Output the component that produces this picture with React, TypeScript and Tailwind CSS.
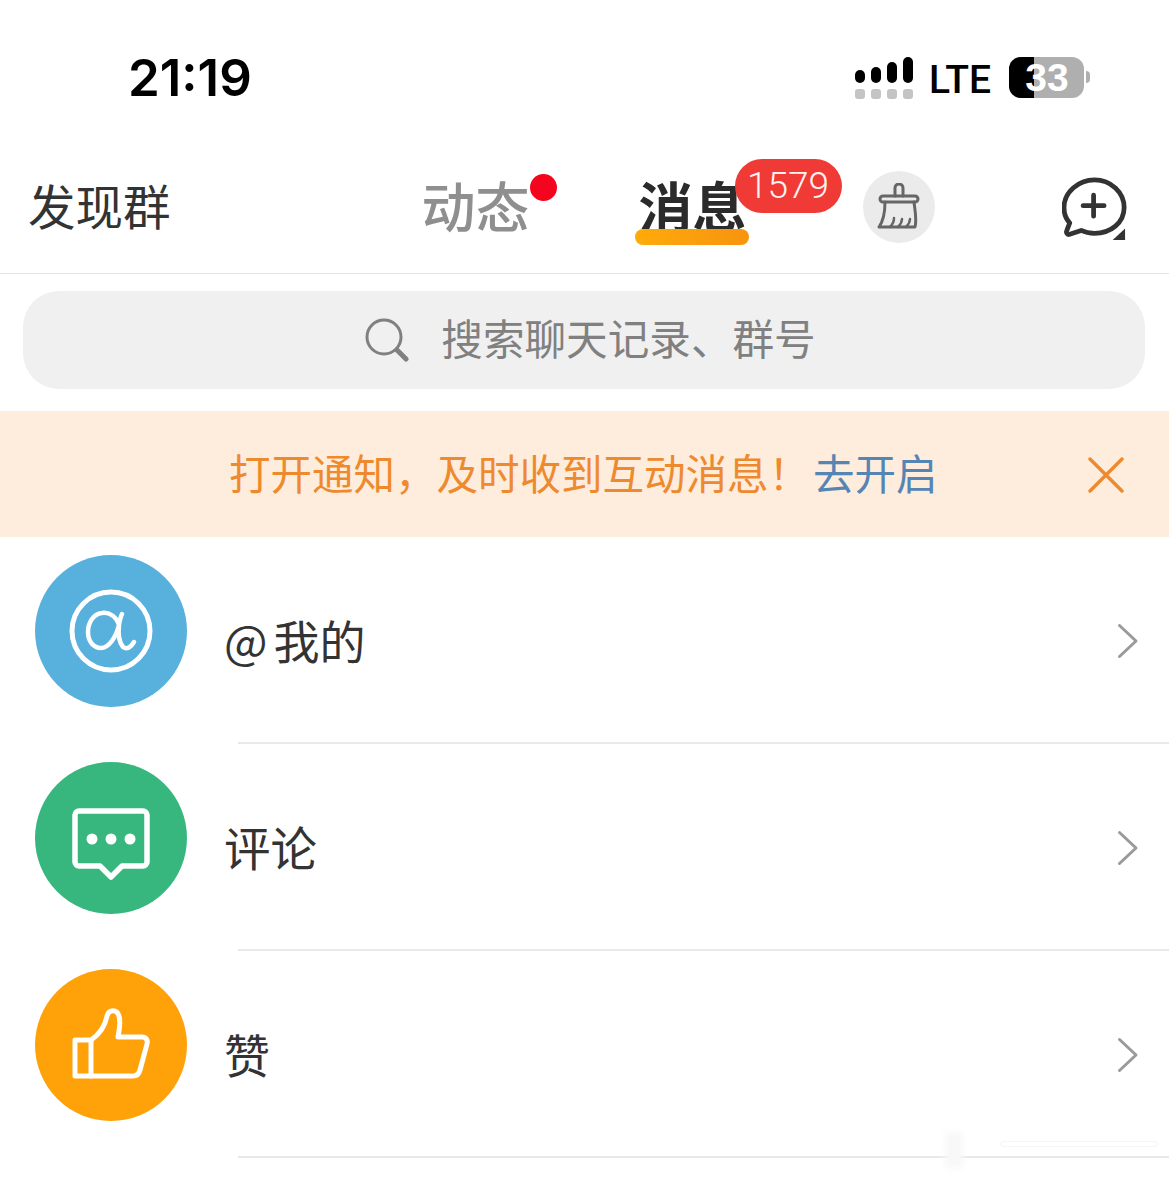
import React from "react";

const cjk = "font-['Noto_Sans_CJK_SC','Noto_Sans',sans-serif]";

function Chevron() {
  return (
    <svg width="24" height="36" viewBox="0 0 24 36" fill="none" className="mr-[29px] mt-[4px] shrink-0">
      <path d="M3.5 2.5 L20 18 L3.5 33.5" stroke="#9a9a9a" strokeWidth="3" strokeLinecap="round" strokeLinejoin="round" />
    </svg>
  );
}

function Row({ color, label, icon, offset }: { color: string; label: React.ReactNode; icon: React.ReactNode; offset: string }) {
  return (
    <div className="h-[207px] relative flex">
      <div className={`w-[152px] h-[152px] rounded-full ml-[35px] mt-[18px] flex items-center justify-center shrink-0 ${color}`}>
        {icon}
      </div>
      <div className="flex-1 flex items-center justify-between ml-[37px] pb-[3px]">
        <div className={`text-[#333] ${offset}`}>{label}</div>
        <Chevron />
      </div>
      <div className="absolute left-[238px] right-0 bottom-0 h-[2px] bg-[#e9e9e9]" />
    </div>
  );
}

export default function App() {
  return (
    <main className={`relative w-[1169px] h-[1181px] bg-white overflow-hidden ${cjk}`}>
      {/* Status bar */}
      <div className="h-[140px] flex items-start justify-between">
        <div className="ml-[128px] mt-[47px] text-[51px] leading-[62px] font-semibold text-black font-['Inter',sans-serif]">
          21:19
        </div>
        <div className="flex items-start mr-[79px] mt-[57px]">
          <div className="w-[58px] mr-[16px]">
            <div className="flex items-end justify-between h-[26px]">
              <div className="w-[10px] h-[13px] bg-black rounded-[5px]" />
              <div className="w-[10px] h-[16px] bg-black rounded-[5px]" />
              <div className="w-[10px] h-[21px] bg-black rounded-[5px]" />
              <div className="w-[10px] h-[26px] bg-black rounded-[5px]" />
            </div>
            <div className="flex justify-between mt-[6px]">
              <div className="w-[10px] h-[10px] bg-[#c4c4c4] rounded-[3px]" />
              <div className="w-[10px] h-[10px] bg-[#c4c4c4] rounded-[3px]" />
              <div className="w-[10px] h-[10px] bg-[#c4c4c4] rounded-[3px]" />
              <div className="w-[10px] h-[10px] bg-[#c4c4c4] rounded-[3px]" />
            </div>
          </div>
          <div className="text-[39px] leading-[44px] font-medium text-black mt-[1px] mr-[18px] font-['Roboto',sans-serif]">LTE</div>
          <div className="relative w-[75px] h-[41px] rounded-[12px] bg-[#afafaf] overflow-hidden">
            <div className="absolute left-0 top-0 bottom-0 w-[25px] bg-black" />
            <div className="absolute inset-0 flex items-center justify-center text-white text-[39px] leading-[38px] font-bold font-['Liberation_Sans',sans-serif] pl-[1px]">33</div>
          </div>
          <div className="w-[4px] h-[12px] mt-[14px] ml-[2px] bg-[#afafaf] rounded-r-[4px]" />
        </div>
      </div>

      {/* Tabs header */}
      <div className="h-[134px] border-b border-[#e4e4e4] flex items-start relative">
        <div className="ml-[28px] mt-[35px] text-[47.5px] leading-[60px] text-[#333]">发现群</div>
        <div className="ml-[251px] mt-[33px] relative">
          <div className="text-[54px] leading-[64px] font-medium text-[#8f8f8f]">动态</div>
          <div className="absolute left-[108px] top-[1px] w-[27px] h-[27px] rounded-full bg-[#f5051d]" />
        </div>
        <div className="ml-[109px] mt-[33px] relative">
          <div className="text-[54px] leading-[64px] font-bold text-[#2b2b2b]">消息</div>
          <div className="absolute left-[-4px] top-[56px] w-[114px] h-[16px] rounded-full bg-gradient-to-r from-[#ffaa0a] to-[#f7940f]" />
          <div className="absolute left-[96px] top-[-14px] w-[107px] h-[54px] rounded-full bg-[#f03a35] flex items-center justify-center text-[#fff2f0] text-[37px] font-light font-['Roboto',sans-serif]">
            1579
          </div>
        </div>
        <div className="ml-[116px] mt-[31px] w-[72px] h-[72px] rounded-full bg-[#ebebeb] flex items-center justify-center">
          <svg width="44" height="48" viewBox="0 0 44 48" fill="none" stroke="#666" strokeWidth="3" strokeLinecap="round" strokeLinejoin="round">
            <path d="M18 13 V5 a4 4 0 0 1 8 0 V13" />
            <rect x="3" y="13" width="38" height="6" rx="3" />
            <path d="M8 19 C8 28 7 37 2 44 H38 C40 36 38 28 37 19" strokeWidth="3" />
            <path d="M13 44 C16 41 17 38 17 35 M21 44 C24 41 25 38 25 36 M29 44 C32 41 33 38 33 36" strokeWidth="2.5" />
          </svg>
        </div>
        <div className="ml-[127px] mt-[37px] relative w-[67px] h-[63px]">
          <svg width="67" height="63" viewBox="0 0 70 66" fill="none">
            <path d="M34 3 C51 3 65 16 65 32 C65 48 51 59 34 59 C29 59 24 58 20 56 L8 60 C5 61 4 58 5 56 L8 48 C4 44 2 38 2 32 C2 16 17 3 34 3 Z" stroke="#333" strokeWidth="5" strokeLinejoin="round" />
            <path d="M33 19 V41 M22 30 H44" stroke="#333" strokeWidth="5" strokeLinecap="round" />
            <path d="M66 54 V66 H53 Z" fill="#333" />
          </svg>
        </div>
      </div>

      {/* Search */}
      <div className="mt-[17px] mx-[23px] mr-[24px] h-[98px] rounded-[36px] bg-[#f0f0f0] flex items-center justify-center pl-[13px]">
        <svg width="44" height="44" viewBox="0 0 44 44" fill="none" className="mr-[32px]">
          <circle cx="19" cy="19" r="17" stroke="#808080" strokeWidth="3" />
          <path d="M32 32 L41 41" stroke="#808080" strokeWidth="5" strokeLinecap="round" />
        </svg>
        <span className="text-[41.6px] leading-[52px] text-[#808080] pb-[6px]">搜索聊天记录、群号</span>
      </div>

      {/* Notification banner */}
      <div className="mt-[22px] h-[126px] bg-[#feecdc] flex items-center relative">
        <div className="ml-[229px] pb-[4px] text-[41.5px] leading-[52px] text-[#ee8a2e] whitespace-nowrap">
          打开通知，及时收到互动消息！<span className="text-[#5585b5] ml-[3px]">去开启</span>
        </div>
        <svg width="36" height="36" viewBox="0 0 36 36" fill="none" className="absolute left-[1088px] top-[46px]">
          <path d="M2 2 L34 34 M34 2 L2 34" stroke="#ee8a2e" strokeWidth="3.4" strokeLinecap="round" />
        </svg>
      </div>

      {/* Rows */}
      <Row
        color="bg-[#58b0dc]"
        offset="text-[46px] leading-[60px]"
        label={<span>@<span className="ml-[6px]">我的</span></span>}
        icon={
          <svg width="84" height="84" viewBox="0 0 84 84" fill="none" stroke="white">
            <circle cx="42" cy="42" r="39" strokeWidth="5" />
            <path d="M50 36 C47 27 40 23 33 24 C24 25 19 34 19 43 C19 53 25 59 32 59 C40 59 47 48 50 36 C51 30 52 27 53 25 M50 36 C49 45 50 53 54 58 C58 61 62 58 65 53" strokeWidth="4.5" strokeLinecap="round" strokeLinejoin="round" />
          </svg>
        }
      />
      <Row
        color="bg-[#37b77e]"
        offset="text-[46.5px] leading-[60px]"
        label="评论"
        icon={
          <svg width="78" height="76" viewBox="0 0 78 76" fill="none" className="mt-[15px]">
            <path d="M7 3 H71 C73 3 75 5 75 7 V54 C75 56 73 58 71 58 H50 L39 69 L28 58 H7 C5 58 3 56 3 54 V7 C3 5 5 3 7 3 Z" stroke="white" strokeWidth="5.5" strokeLinejoin="round" />
            <circle cx="20" cy="31" r="5.5" fill="white" />
            <circle cx="39" cy="31" r="5.5" fill="white" />
            <circle cx="58" cy="31" r="5.5" fill="white" />
          </svg>
        }
      />
      <Row
        color="bg-[#ffa108]"
        offset="text-[46px] leading-[60px]"
        label="赞"
        icon={
          <svg width="78" height="74" viewBox="0 0 78 74" fill="none">
            <path d="M3 32 H19 V68 H3 Z" stroke="white" strokeWidth="5" strokeLinejoin="round" />
            <path d="M19 32 C28 26 33 18 35 8 C37 1 45 1 47 8 C49 16 47 23 46 29 H70 C74 29 76 32 75 36 L68 62 C67 66 65 68 61 68 H19" stroke="white" strokeWidth="5" strokeLinejoin="round" strokeLinecap="round" />
          </svg>
        }
      />

      {/* Faint watermark smudge, bottom right */}
      <div className="absolute left-[945px] top-[1132px] w-[18px] h-[36px] bg-[#f8f8f8] blur-[3px]" />
      <div className="absolute left-[1000px] top-[1141px] w-[158px] h-[6px] rounded-full border border-[#f5f5f5]" />
    </main>
  );
}
